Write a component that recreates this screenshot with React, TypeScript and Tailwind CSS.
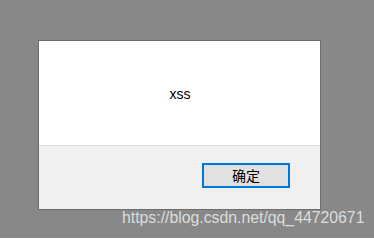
import React from 'react';

const App: React.FC = () => {
  return (
    <div
      className="relative w-[374px] h-[238px] overflow-hidden bg-[#888888] pt-[40px] pl-[38px]"
      style={{ fontFamily: '"Liberation Sans", "Noto Sans CJK SC", sans-serif' }}
    >
      <div className="w-[283px] h-[170px] border border-[#6e6e6e] flex flex-col">
        <div className="h-[104px] bg-white flex items-center justify-center pl-[1px] pt-[2px]">
          <span className="text-[14px] text-black">xss</span>
        </div>
        <div className="flex-1 bg-[#f0f0f0] border-t border-[#dfdfdf] flex justify-end items-start pt-[17px] pr-[30px]">
          <button className="w-[88px] h-[25px] border-2 border-[#0078d7] bg-[#e1e1e1] flex items-center justify-center text-[14px] text-black"
            style={{ fontFamily: '"Noto Sans CJK SC", sans-serif' }}>
            确定
          </button>
        </div>
      </div>
      <div className="absolute left-[122px] top-[208px] text-[15.8px] leading-[20px] text-[#dcdcdc]">
        https://blog.csdn.net/qq_44720671
      </div>
    </div>
  );
};

export default App;
